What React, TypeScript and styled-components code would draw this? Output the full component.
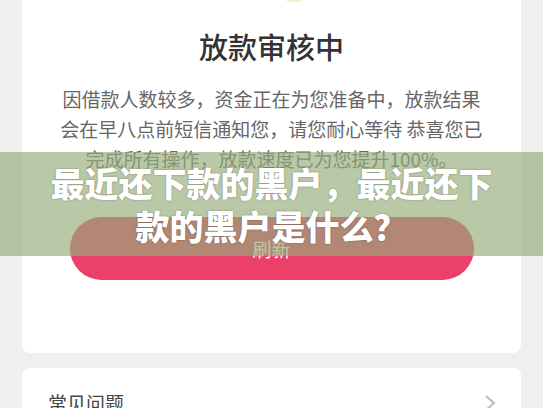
import React from 'react'
import styled, { createGlobalStyle } from 'styled-components'

const GlobalStyle = createGlobalStyle`
    html, body {
        margin: 0;
        padding: 0;
        background-color: #efefef;
        font-family: "Noto Sans CJK SC", "Noto Sans", sans-serif;
    }
`

const Page = styled.div`
    position: relative;
    width: 543px;
    height: 408px;
    overflow: hidden;
    padding: 0 22px;
    box-sizing: border-box;
    display: flex;
    flex-direction: column;
    gap: 15px;
`

const Card = styled.div`
    background-color: white;
    border-radius: 8px;
    margin-top: -10px;
    padding: 37px 0 73px;
    display: flex;
    flex-direction: column;
    align-items: center;
`

const TopIcon = styled.div`
    width: 40px;
    height: 40px;
    margin-top: -65px;
    margin-bottom: 25px;
    margin-left: 44px;
    border-radius: 50%;
    background-color: #f1efc2;
`

const Title = styled.h1`
    margin: 0;
    font-size: 29px;
    line-height: 38px;
    font-weight: 500;
    color: #333;
`

const Message = styled.p`
    margin: 19px 0 0;
    font-size: 19px;
    line-height: 30px;
    color: #666;
    text-align: center;
`

const Line = styled.span`
    display: block;
    white-space: nowrap;
`

const RefreshButton = styled.button`
    margin-top: 43px;
    width: 404px;
    height: 63px;
    border: none;
    border-radius: 32px;
    background-color: #ea4069;
    color: white;
    font-family: inherit;
    font-size: 19px;
`

const FaqCard = styled.div`
    background-color: white;
    border-radius: 8px;
    padding: 20px 24px 20px 26px;
    display: flex;
    align-items: center;
    justify-content: space-between;
`

const FaqLabel = styled.span`
    font-size: 19px;
    line-height: 30px;
    color: #444;
`

const Banner = styled.div`
    position: absolute;
    left: 0;
    right: 0;
    top: 152px;
    height: 104px;
    background-color: rgba(148, 172, 122, 0.66);
    display: flex;
    align-items: center;
    justify-content: center;
`

const BannerText = styled.div`
    width: 450px;
    text-align: center;
    color: white;
    font-size: 34px;
    line-height: 43px;
    font-weight: 900;
    text-shadow: 0 0 2px rgba(0, 0, 0, 0.35);
`

function Chevron() {
    return (
        <svg width="14" height="20" viewBox="0 0 14 20">
            <path d="M3 3 L11 10 L3 17" stroke="#bbb" strokeWidth="2" fill="none" />
        </svg>
    )
}

export default function App() {
    return (
        <>
            <GlobalStyle />
            <Page>
                <Card>
                    <TopIcon />
                    <Title>放款审核中</Title>
                    <Message>
                        <Line>因借款人数较多，资金正在为您准备中，放款结果</Line>
                        <Line>会在早八点前短信通知您，请您耐心等待 恭喜您已</Line>
                        <Line>完成所有操作，放款速度已为您提升100%。</Line>
                    </Message>
                    <RefreshButton>刷新</RefreshButton>
                </Card>
                <FaqCard>
                    <FaqLabel>常见问题</FaqLabel>
                    <Chevron />
                </FaqCard>
                <Banner>
                    <BannerText>最近还下款的黑户，最近还下款的黑户是什么？</BannerText>
                </Banner>
            </Page>
        </>
    )
}
